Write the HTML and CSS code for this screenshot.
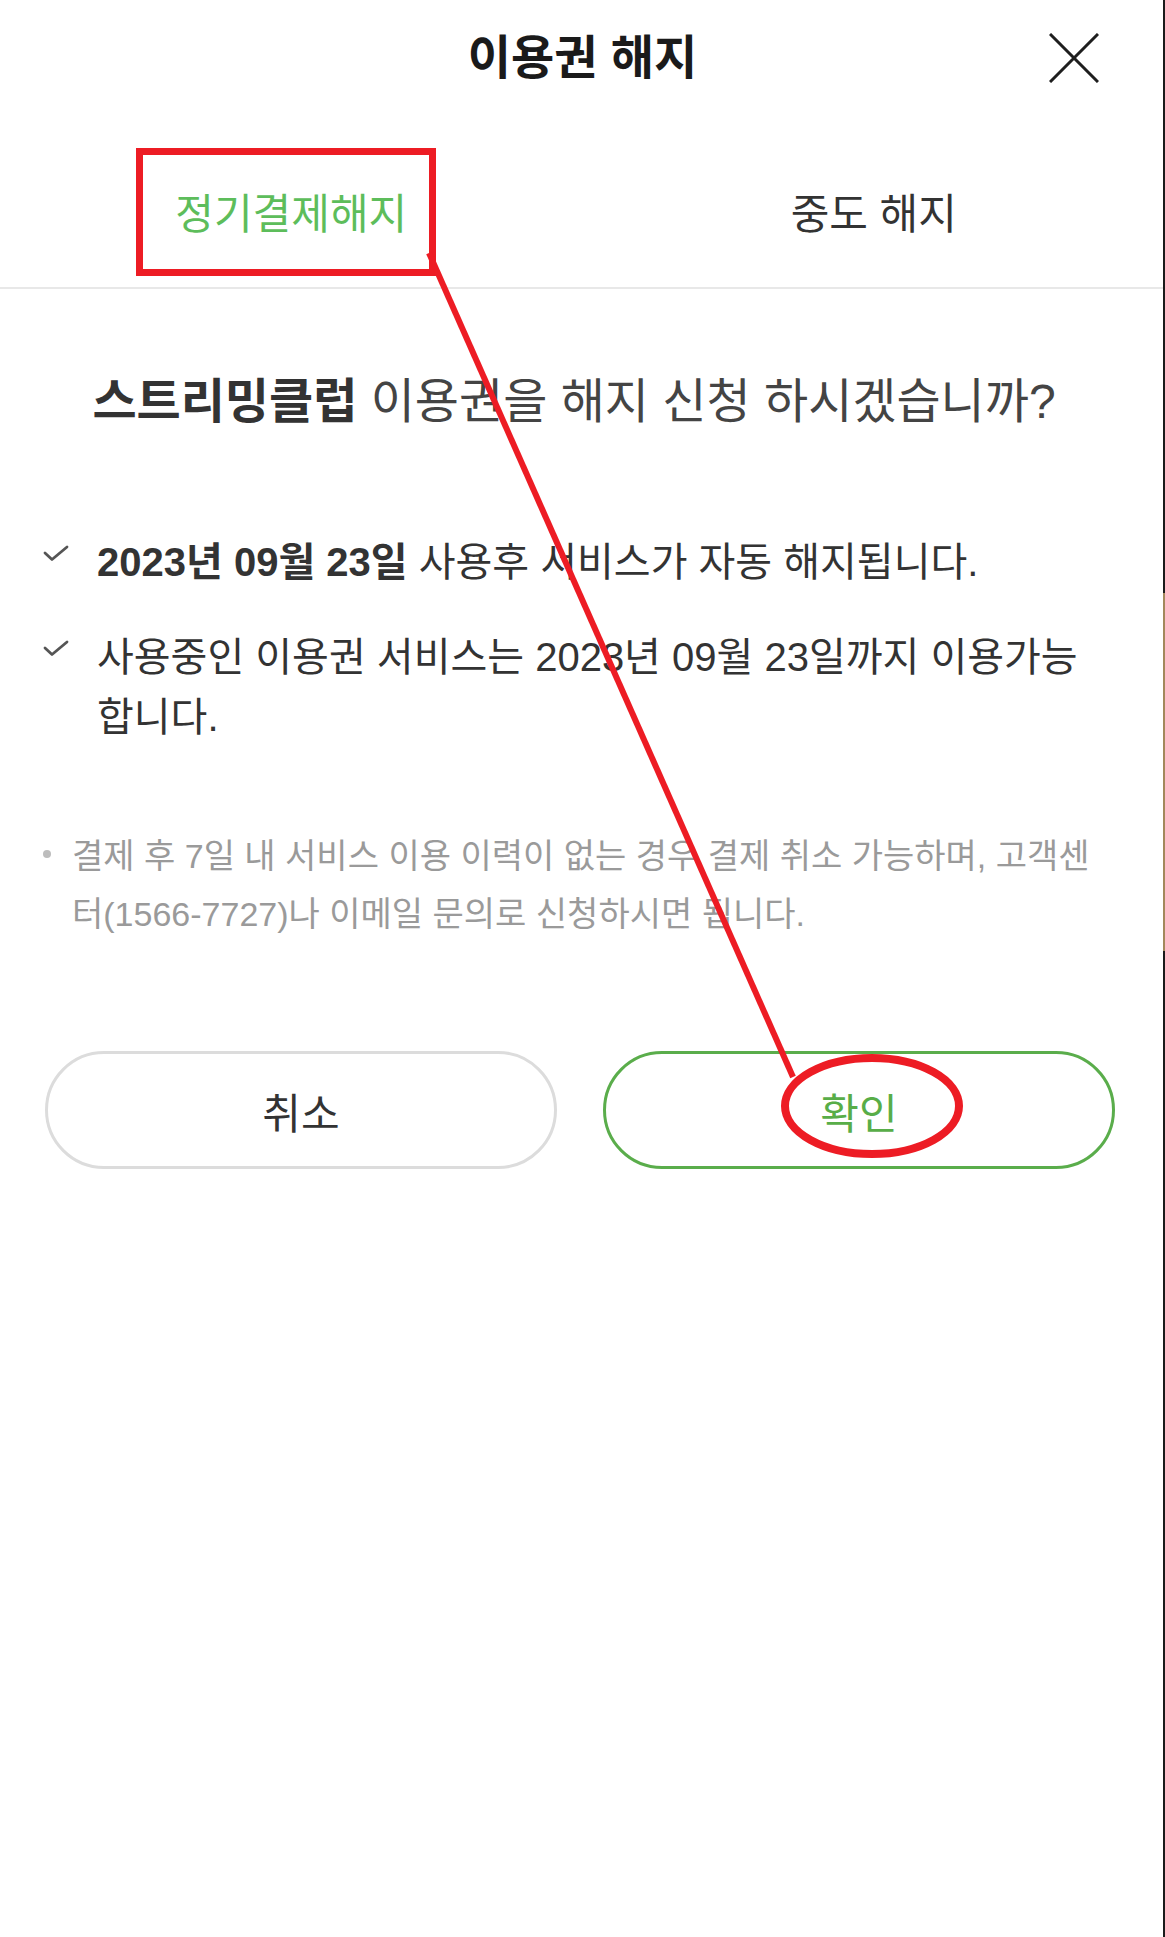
FILE: index.html
```html
<!DOCTYPE html>
<html lang="ko">
<head>
<meta charset="utf-8">
<title>이용권 해지</title>
<link rel="stylesheet" href="styles.css">
</head>
<body>
<div class="page">
  <header class="header">
    <span class="header-side"></span>
    <h1 class="title">이용권 해지</h1>
    <button class="close" type="button" aria-label="닫기">
      <svg class="close-icon" viewBox="0 0 50 50" width="50" height="50">
        <path d="M1 1 L49 49 M49 1 L1 49" fill="none" stroke="#1e1e1e" stroke-width="3"/>
      </svg>
    </button>
  </header>

  <nav class="tabs">
    <div class="tab tab-active">정기결제해지</div>
    <div class="tab">중도 해지</div>
  </nav>

  <main class="content">
    <p class="question"><strong>스트리밍클럽</strong> 이용권을 해지 신청 하시겠습니까?</p>

    <ul class="checks">
      <li class="check-item">
        <svg class="check-icon" viewBox="0 0 26 18" width="26" height="18">
          <path d="M2 8 L9 14.5 L24 2" fill="none" stroke="#555" stroke-width="2.8" stroke-linecap="round" stroke-linejoin="round"/>
        </svg>
        <span class="check-text"><strong>2023년 09월 23일</strong> 사용후 서비스가 자동 해지됩니다.</span>
      </li>
      <li class="check-item">
        <svg class="check-icon" viewBox="0 0 26 18" width="26" height="18">
          <path d="M2 8 L9 14.5 L24 2" fill="none" stroke="#555" stroke-width="2.8" stroke-linecap="round" stroke-linejoin="round"/>
        </svg>
        <span class="check-text">사용중인 이용권 서비스는 2023년 09월 23일까지 이용가능합니다.</span>
      </li>
    </ul>

    <p class="note"><span class="note-dot"></span><span class="note-text">결제 후 7일 내 서비스 이용 이력이 없는 경우 결제 취소 가능하며, 고객센터(1566-7727)나 이메일 문의로 신청하시면 됩니다.</span></p>

    <div class="actions">
      <button class="btn btn-cancel" type="button">취소</button>
      <button class="btn btn-ok" type="button">확인</button>
    </div>
  </main>

  <svg class="annotation" viewBox="0 0 1165 1937" width="1165" height="1937">
    <rect x="139.5" y="151.5" width="293" height="121" fill="none" stroke="#ed1c24" stroke-width="7"/>
    <line x1="429" y1="253" x2="793" y2="1077" stroke="#ed1c24" stroke-width="6"/>
    <ellipse cx="872" cy="1106" rx="87" ry="48" fill="none" stroke="#ed1c24" stroke-width="8"/>
  </svg>
  <div class="edge"></div>
  <div class="scroll-thumb"></div>
</div>
</body>
</html>
```

FILE: styles.css
```css
* {
  box-sizing: border-box;
}

html, body {
  margin: 0;
  padding: 0;
  background: #ffffff;
}

body {
  font-family: "Liberation Sans", "Noto Sans CJK KR", sans-serif;
  color: #333333;
}

.page {
  position: relative;
  width: 1165px;
  min-height: 1937px;
  background: #ffffff;
  overflow: hidden;
}

/* Header */
.header {
  display: grid;
  grid-template-columns: 1fr auto 1fr;
  align-items: center;
  height: 115px;
}

.title {
  margin: 0;
  font-size: 47px;
  line-height: 50px;
  font-weight: 700;
  color: #1a1a1a;
}

.close {
  justify-self: end;
  margin-right: 66px;
  padding: 0;
  border: 0;
  background: none;
  width: 50px;
  height: 50px;
  display: flex;
}

/* Tabs */
.tabs {
  display: grid;
  grid-template-columns: 1fr 1fr;
  border-bottom: 2px solid #e8e8e8;
}

.tab {
  text-align: center;
  font-size: 42px;
  line-height: 50px;
  padding: 75px 0 47px;
  color: #333333;
}

.tab-active {
  color: #5dbd5b;
}

/* Content */
.content {
  padding: 0 60px 0 43px;
}

.question {
  margin: 83px 0 0;
  text-align: center;
  font-size: 48px;
  line-height: 60px;
  color: #444444;
  white-space: nowrap;
}

.question strong {
  color: #333333;
  font-weight: 700;
}

.checks {
  list-style: none;
  margin: 100px 0 0;
  padding: 0;
  display: flex;
  flex-direction: column;
  gap: 35px;
}

.check-item {
  display: flex;
  align-items: flex-start;
  gap: 28px;
}

.check-icon {
  flex: none;
  margin-top: 13px;
}

.check-text {
  font-size: 40px;
  line-height: 60px;
  color: #333333;
}

.check-text strong {
  font-weight: 700;
}

.note {
  margin: 80px 0 0;
  display: flex;
  align-items: flex-start;
  gap: 21px;
  font-size: 34px;
  line-height: 58px;
  color: #9a9a9a;
}

.note-dot {
  flex: none;
  width: 8px;
  height: 8px;
  border-radius: 50%;
  background: #bdbdbd;
  margin-top: 23px;
}

.actions {
  margin: 108px -10px 0 2px;
  display: grid;
  grid-template-columns: 1fr 1fr;
  gap: 46px;
}

.btn {
  height: 118px;
  border-radius: 59px;
  background: #ffffff;
  font-family: "Liberation Sans", "Noto Sans CJK KR", sans-serif;
  font-size: 42px;
  padding: 0;
}

.btn-cancel {
  border: 3px solid #dcdcdc;
  color: #333333;
}

.btn-ok {
  border: 3px solid #5aad4b;
  color: #58ad48;
}

/* Annotation overlay */
.annotation {
  position: absolute;
  top: 0;
  left: 0;
  pointer-events: none;
}

.edge {
  position: absolute;
  top: 0;
  right: 0;
  width: 2px;
  height: 100%;
  background: #1b1b1b;
}

.scroll-thumb {
  position: absolute;
  top: 593px;
  right: 0;
  width: 2px;
  height: 358px;
  background: #a3885c;
}
```
